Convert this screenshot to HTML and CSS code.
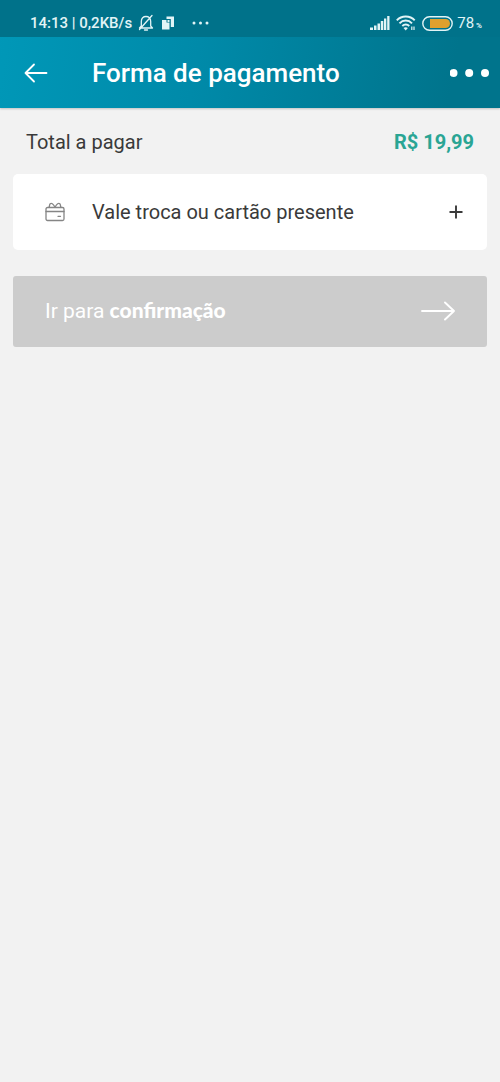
FILE: index.html
```html
<!DOCTYPE html>
<html lang="pt-BR">
<head>
<meta charset="utf-8">
<meta name="viewport" content="width=device-width, initial-scale=1">
<title>Forma de pagamento</title>
<link rel="stylesheet" href="styles.css">
</head>
<body>
<header class="top">
  <div class="status">
    <div class="status-left">
      <span class="clock">14:13 | 0,2KB/s</span>
      <svg class="bell" width="16" height="18" viewBox="0 0 16 18" fill="none" stroke="currentColor" stroke-width="1.300" stroke-linecap="round" stroke-linejoin="round"><path d="M1.500 14h13l-1.800-2V7.500C12.700 4.300 10.700 2.500 8 2.500S3.300 4.300 3.300 7.500V12l-1.800 2M6.500 16h3M14 1.500 1.500 15.500"/></svg>
      <svg class="cards" width="14" height="14" viewBox="0 0 14 14" fill="currentColor"><path d="M5.500.5H13v10.500H9.800V3H5.500z"/><path d="M1 4h4.500v2.500h3v7H1z"/><path d="M6.500 4h2v2h-2z"/></svg>
      <svg width="18" height="4" viewBox="0 0 18 4" fill="currentColor"><circle cx="2" cy="2" r="1.500"/><circle cx="8.500" cy="2" r="1.500"/><circle cx="15" cy="2" r="1.500"/></svg>
    </div>
    <div class="status-right">
      <svg width="20" height="14" viewBox="0 0 20 14" fill="currentColor"><path d="M0 11.500h3V14H0zM4 9.500h2.500V14H4zM7.500 7.500H10V14H7.500zM10.800 5h2.500v9h-2.500zM14 2.500h2.300V14H14zM17.200 0h2.300v14h-2.300z"/></svg>
      <svg width="20" height="16" viewBox="0 0 20 16" fill="none" stroke="currentColor" stroke-width="1.900"><path d="M.8 5.300C5.500.2 14 .2 18.700 5.300M3.500 8.300c3.500-3.700 9-3.700 12.500 0M6.300 11c2-2 5-2 7 0"/><path d="M7.500 13c1.400-1.100 3-1.100 4.400 0l-2.200 2.500z" fill="currentColor" stroke="none"/><path d="M15.800 11.500v3.500M18 11.500v3.500" stroke-width="1.200"/></svg>
      <svg width="31" height="15" viewBox="0 0 31 15"><rect x=".8" y=".8" width="29.400" height="13.400" rx="6.700" fill="none" stroke="currentColor" stroke-width="1.400"/><path class="charge" d="M8 3h15.500a4.500 4.500 0 0 1 0 9H8z"/></svg>
      <span class="level">78<small>%</small></span>
    </div>
  </div>
  <div class="bar">
    <button class="icon-button" type="button" aria-label="Voltar">
      <svg width="24" height="20" viewBox="0 0 24 20" fill="none" stroke="currentColor" stroke-width="1.800" stroke-linecap="round" stroke-linejoin="round"><path d="M22.500 10H1.500M10 1.500 1.500 10l8.500 8.500"/></svg>
    </button>
    <h1 class="title">Forma de pagamento</h1>
    <button class="icon-button" type="button" aria-label="Mais opções">
      <svg width="40" height="10" viewBox="0 0 40 10" fill="currentColor"><circle cx="3.500" cy="5" r="4"/><circle cx="19.200" cy="5" r="4"/><circle cx="35" cy="5" r="4"/></svg>
    </button>
  </div>
</header>
<main class="content">
  <div class="total">
    <span>Total a pagar</span>
    <strong class="price">R$ 19,99</strong>
  </div>
  <button class="voucher" type="button">
    <svg class="gift" width="20" height="20" viewBox="0 0 20 20" fill="none" stroke="currentColor" stroke-width="1.300" stroke-linejoin="round" stroke-linecap="round"><rect x="1" y="5.500" width="18" height="13" rx="1.500"/><path d="M1 9.500h18M13 14.300h2.500M10 5.300C8.200 1.500 6.300.8 5.200 1.800 4.200 2.800 4.800 4 4 5.300M10 5.300C11.800 1.500 13.700.8 14.800 1.800c1 1 .4 2.200 1.200 3.500"/></svg>
    <span class="voucher-label">Vale troca ou cartão presente</span>
    <svg width="14" height="14" viewBox="0 0 14 14" fill="none" stroke="currentColor" stroke-width="1.900"><path d="M7 .5v13M.5 7h13"/></svg>
  </button>
  <button class="confirm" type="button" disabled>
    <span>Ir para <b class="step">confirmação</b></span>
    <svg width="34" height="20" viewBox="0 0 34 20" fill="none" stroke="currentColor" stroke-width="1.900" stroke-linecap="round" stroke-linejoin="round"><path d="M1 10h32M24 1.500l9 8.500-9 8.500"/></svg>
  </button>
</main>
</body>
</html>
```
FILE: styles.css
```css
* {
  box-sizing: border-box;
}

body {
  margin: 0;
  min-height: 100vh;
  background: #f2f2f2;
  color: #3a3a3a;
  font-family: Roboto, "Liberation Sans", sans-serif;
  font-size: 20px;
  line-height: 24px;
}

button {
  border: 0;
  padding: 0;
  background: none;
  color: inherit;
  font: inherit;
  text-align: left;
}

svg {
  display: block;
  flex: none;
}

.top {
  color: #fff;
  background: linear-gradient(100deg, #0098b8 0%, #008aa9 40%, #00748c 90%);
  box-shadow: 0 1px 2px rgba(0, 0, 0, 0.2);
}

.status {
  display: flex;
  align-items: center;
  justify-content: space-between;
  padding: 14px 18px 5px 30px;
  background: #00728a;
  color: #e2f4f6;
  font-size: 15px;
  line-height: 18px;
}

.status-left,
.status-right {
  display: flex;
  align-items: center;
}

.clock {
  font-weight: 500;
}

.bell {
  margin-left: 6px;
}

.cards {
  margin: 0 17px 0 7px;
}

.status-right {
  gap: 6px;
}

.charge {
  fill: #dfa02e;
}

.level {
  display: flex;
  align-items: baseline;
  margin-left: -2px;
}

.level small {
  margin-left: 2px;
  font-size: 8px;
  font-weight: 700;
  line-height: 8px;
}

.bar {
  display: flex;
  align-items: center;
  padding: 20px 10px 19px 24px;
}

.title {
  flex: 1;
  margin: 0 0 0 44px;
  font-size: 26px;
  font-weight: 500;
  line-height: 32px;
}

.content {
  display: flex;
  flex-direction: column;
  padding: 22px 13px;
}

.total {
  display: flex;
  justify-content: space-between;
  padding: 0 13px 20px;
}

.price {
  color: #2aa594;
  font-weight: 700;
}

.voucher {
  display: flex;
  align-items: center;
  padding: 26px 24px 26px 32px;
  border-radius: 5px;
  background: #fff;
}

.gift {
  color: #858585;
}

.voucher-label {
  flex: 1;
  margin-left: 27px;
}

.confirm {
  display: flex;
  align-items: center;
  justify-content: space-between;
  margin-top: 26px;
  padding: 23px 32px 24px;
  border-radius: 3px;
  background: #ccc;
  color: #fff;
  font-size: 21px;
}

.step {
  font-family: Lato, Roboto, sans-serif;
  font-weight: 900;
  line-height: 20px;
}
```
